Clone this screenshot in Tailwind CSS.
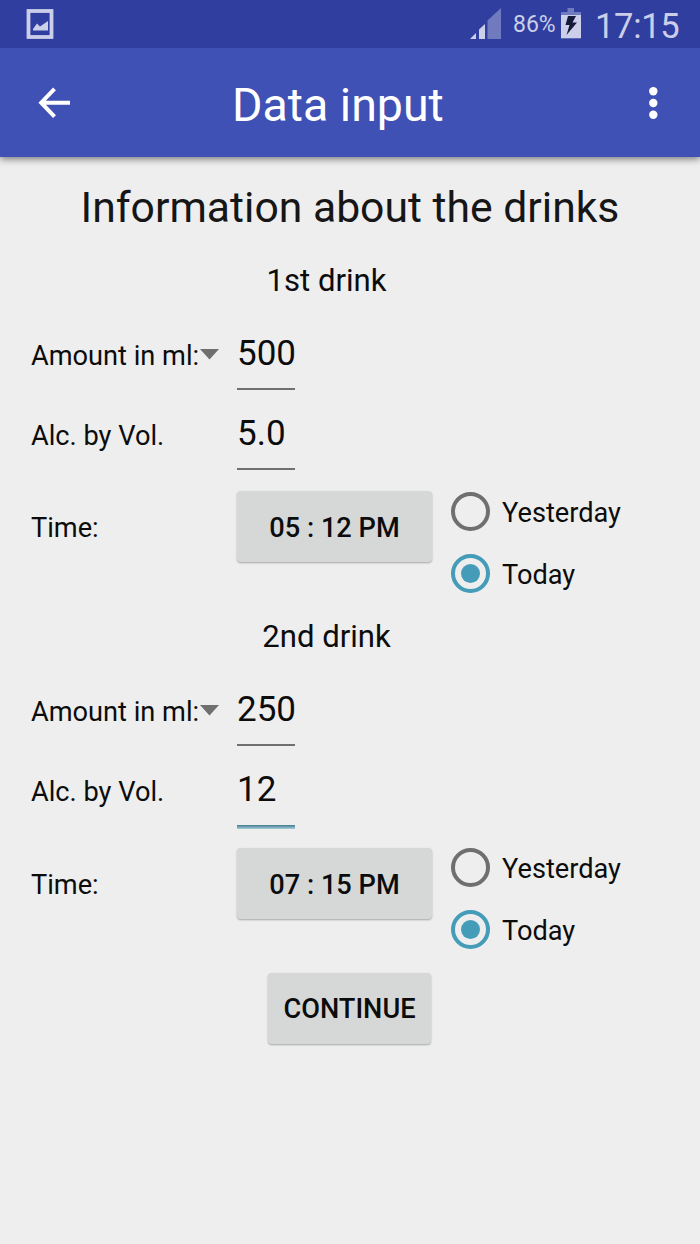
<!DOCTYPE html>
<html lang="en">

<head>
    <meta charset="UTF-8">
    <meta name="viewport" content="width=device-width, initial-scale=1.0">
    <title>Data input</title>
    <script src="https://cdn.jsdelivr.net/npm/@tailwindcss/browser@4"></script>
</head>

<body class="bg-[#eeeeee] text-[#0c0c0c] font-[Roboto,sans-serif] min-h-screen overflow-x-hidden">
    <!-- Status bar -->
    <div class="relative z-10 flex items-center justify-between h-12 pl-[26px] pr-[21px] bg-[#303e9f] text-[#cbcfe9]">
        <svg class="w-7 h-[30px]" viewBox="0 0 28 30">
            <rect x="2.5" y="2" width="23" height="26" fill="none" stroke="#cbcfe9" stroke-width="3.8" />
            <path d="M7 20 L11 14.5 L14 17.5 L22 12 V21.5 H7 Z" fill="#cbcfe9" />
        </svg>
        <div class="flex items-center">
            <svg class="w-8 h-8" viewBox="0 0 32 32">
                <path d="M0 31 L6 25 V31 Z" fill="#cbcfe9" />
                <path d="M9 31 V21.5 L15 16 V31 Z" fill="#cbcfe9" />
                <path d="M17.5 31 V12.5 L31 0 V31 Z" fill="#707bbf" />
            </svg>
            <span class="ml-[11px] w-[42px] pt-[2px] text-[23px] leading-8 whitespace-nowrap">86%</span>
            <svg class="ml-[6px] w-5 h-8" viewBox="0 0 20 32">
                <path d="M0 8 V4 H6.5 V-0.5 H13 V4 H20 V8 Z" fill="#707bbf" />
                <rect y="7" width="20" height="23.3" fill="#cbcfe9" />
                <path d="M7 8 H15 L11.5 14.5 H16 L5.5 27 L8.5 17 H4.5 Z" fill="#15193a" />
            </svg>
            <span class="ml-[14px] w-[84px] pt-[3px] text-[34.5px] leading-8 tracking-[-0.3px] whitespace-nowrap">17:15</span>
        </div>
    </div>

    <!-- App bar -->
    <header class="relative flex items-center h-[109px] px-[38px] bg-[#3f51b5] text-white shadow-[0_2px_7px_rgba(0,0,0,0.5)]">
        <svg class="w-8 h-8" viewBox="0 0 32 32" fill="none" stroke="white" stroke-width="4">
            <path d="M16.5 1.8 L3.2 15.7 L16.5 29.6 M4 15.7 H32" />
        </svg>
        <h1 class="ml-[162px] pt-[5px] text-[46.5px] leading-none whitespace-nowrap">Data input</h1>
        <svg class="w-8 h-8 ml-auto" viewBox="0 0 32 32" fill="white">
            <circle cx="23.3" cy="4.3" r="4.2" />
            <circle cx="23.3" cy="16" r="4.2" />
            <circle cx="23.3" cy="27.7" r="4.2" />
        </svg>
    </header>

    <main>
        <h2 class="h-[101px] flex items-center justify-center text-[42.7px] text-[#161616]">Information about the drinks</h2>

        <!-- 1st drink -->
        <section class="h-[356px] pl-[31px] text-[27.2px] leading-none">
            <h3 class="h-[44px] w-[591px] mb-[13px] pt-[2px] flex items-center justify-center text-[31.1px]">1st drink</h3>
            <div class="h-20 flex items-center">
                <div class="w-[206px] flex items-center whitespace-nowrap"><span class="pt-[4px]">Amount in ml:</span>
                    <svg class="w-[19px] h-[11px] ml-[1px]" viewBox="0 0 19 11"><path d="M0 0 H19 L9.5 10.5 Z" fill="#6f6f6f" /></svg>
                </div>
                <div class="w-[58px] h-[70px] pt-[16px] border-b-2 border-[#707070] text-[35px]">500</div>
            </div>
            <div class="h-20 flex items-center">
                <div class="w-[206px] pt-[4px]">Alc. by Vol.</div>
                <div class="w-[58px] h-[70px] pt-[16px] border-b-2 border-[#707070] text-[35px]">5.0</div>
            </div>
            <div class="mt-[5px] h-[125px] flex">
                <div class="w-[206px] pt-[35px]">Time:</div>
                <button class="w-[195px] h-[71px] mt-[11px] pt-[4px] rounded-[4px] bg-[#d6d8d7] font-medium shadow-[0_1px_2px_rgba(0,0,0,0.3)]">05 : 12 PM</button>
                <div class="ml-[19px]">
                    <label class="h-[62px] flex items-center gap-3">
                        <span class="size-[39px] rounded-full border-[4px] border-[#6f6f6f]"></span><span class="pt-[5px]">Yesterday</span>
                    </label>
                    <label class="h-[62px] flex items-center gap-3">
                        <span class="size-[39px] rounded-full border-[4px] border-[#459cb8] p-[6px]"><span class="block size-full rounded-full bg-[#459cb8]"></span></span><span class="pt-[5px]">Today</span>
                    </label>
                </div>
            </div>
        </section>

        <!-- 2nd drink -->
        <section class="h-[356px] pl-[31px] text-[27.2px] leading-none">
            <h3 class="h-[44px] w-[591px] mb-[13px] pt-[2px] flex items-center justify-center text-[31.1px]">2nd drink</h3>
            <div class="h-20 flex items-center">
                <div class="w-[206px] flex items-center whitespace-nowrap"><span class="pt-[4px]">Amount in ml:</span>
                    <svg class="w-[19px] h-[11px] ml-[1px]" viewBox="0 0 19 11"><path d="M0 0 H19 L9.5 10.5 Z" fill="#6f6f6f" /></svg>
                </div>
                <div class="w-[58px] h-[70px] pt-[16px] border-b-2 border-[#707070] text-[35px]">250</div>
            </div>
            <div class="h-20 flex items-center">
                <div class="w-[206px] pt-[4px]">Alc. by Vol.</div>
                <div class="w-[58px] h-[74px] pt-[18px] text-[35px]">12
                    <div class="mt-[18px] h-1 bg-linear-to-b from-[#3f7d90] to-[#a9cfdb]"></div>
                </div>
            </div>
            <div class="mt-[5px] h-[125px] flex">
                <div class="w-[206px] pt-[36px]">Time:</div>
                <button class="w-[195px] h-[71px] mt-[12px] pt-[4px] rounded-[4px] bg-[#d6d8d7] font-medium shadow-[0_1px_2px_rgba(0,0,0,0.3)]">07 : 15 PM</button>
                <div class="ml-[19px]">
                    <label class="h-[62px] flex items-center gap-3">
                        <span class="size-[39px] rounded-full border-[4px] border-[#6f6f6f]"></span><span class="pt-[6px]">Yesterday</span>
                    </label>
                    <label class="h-[62px] flex items-center gap-3">
                        <span class="size-[39px] rounded-full border-[4px] border-[#459cb8] p-[6px]"><span class="block size-full rounded-full bg-[#459cb8]"></span></span><span class="pt-[6px]">Today</span>
                    </label>
                </div>
            </div>
        </section>

        <button class="block w-[163px] h-[71px] mt-[3px] ml-[268px] pt-[2px] rounded-[4px] bg-[#d6d8d7] text-[27.2px] font-medium shadow-[0_1px_2px_rgba(0,0,0,0.3)]">CONTINUE</button>
    </main>
</body>

</html>
